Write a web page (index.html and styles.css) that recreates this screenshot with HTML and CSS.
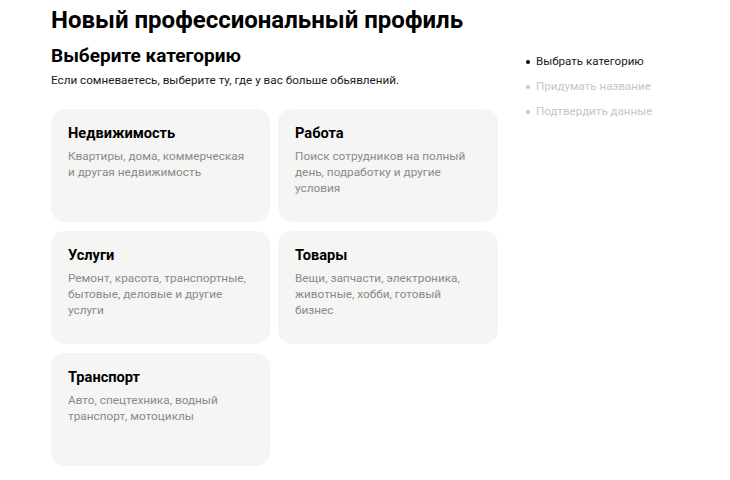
FILE: index.html
```html
<!DOCTYPE html>
<html lang="ru">
<head>
<meta charset="utf-8">
<link rel="stylesheet" href="styles.css">
</head>
<body>
<div class="page">
  <h1 class="title">Новый профессиональный профиль</h1>
  <div class="layout">
    <main class="main">
      <h2 class="subtitle">Выберите категорию</h2>
      <p class="hint">Если сомневаетесь, выберите ту, где у вас больше обьявлений.</p>
      <div class="grid">
        <div class="card">
          <div class="card-title">Недвижимость</div>
          <div class="card-text">Квартиры, дома, коммерческая и другая недвижимость</div>
        </div>
        <div class="card">
          <div class="card-title">Работа</div>
          <div class="card-text">Поиск сотрудников на полный день, подработку и другие условия</div>
        </div>
        <div class="card">
          <div class="card-title">Услуги</div>
          <div class="card-text">Ремонт, красота, транспортные, бытовые, деловые и другие услуги</div>
        </div>
        <div class="card">
          <div class="card-title">Товары</div>
          <div class="card-text">Вещи, запчасти, электроника, животные, хобби, готовый бизнес</div>
        </div>
        <div class="card">
          <div class="card-title">Транспорт</div>
          <div class="card-text">Авто, спецтехника, водный транспорт, мотоциклы</div>
        </div>
      </div>
    </main>
    <ul class="steps">
      <li class="step active">Выбрать категорию</li>
      <li class="step">Придумать название</li>
      <li class="step">Подтвердить данные</li>
    </ul>
  </div>
</div>
</body>
</html>
```

FILE: styles.css
```css
* { box-sizing: border-box; }
html, body { margin: 0; padding: 0; background: #fff; }
body {
  font-family: Roboto, "Noto Sans", sans-serif;
  color: #000;
}
.page {
  padding: 5px 0 0 51px;
}
.title {
  margin: 0;
  font-size: 24px;
  line-height: 30px;
  font-weight: 700;
}
.layout {
  display: flex;
  gap: 23px;
  margin-top: 10px;
}
.main {
  width: 447px;
}
.subtitle {
  margin: 0;
  font-size: 19px;
  line-height: 22px;
  font-weight: 700;
}
.hint {
  margin: 4px 0 0;
  font-size: 11.7px;
  line-height: 18px;
  color: #1a1a1a;
}
.grid {
  margin-top: 20px;
  display: grid;
  grid-template-columns: 219px 220px;
  gap: 9px 8px;
}
.card {
  height: 113px;
  border-radius: 14px;
  background: #f5f5f4;
  padding: 14px 22px 14px 17px;
}
.card-title {
  font-size: 14.6px;
  line-height: 20px;
  font-weight: 700;
  color: #000;
}
.card-text {
  margin-top: 5px;
  font-size: 11.8px;
  line-height: 16px;
  color: #8a8a8a;
}
.steps {
  list-style: none;
  margin: 0;
  padding: 4px 0 0 5px;
}
.step {
  font-size: 11.6px;
  line-height: 25px;
  color: #c6c6c6;
  display: flex;
  align-items: center;
  gap: 6px;
}
.step::before {
  content: "";
  width: 4px;
  height: 4px;
  border-radius: 50%;
  background: #c6c6c6;
  flex: none;
}
.step.active { color: #1a1a1a; }
.step.active::before { background: #000; }
```
